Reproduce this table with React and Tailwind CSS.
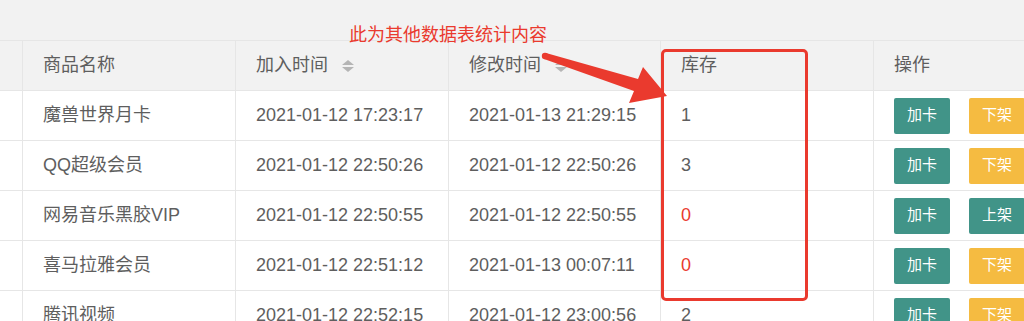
import React from 'react';

const rows = [
  { name: '魔兽世界月卡', add: '2021-01-12 17:23:17', mod: '2021-01-13 21:29:15', stock: 1, on: true },
  { name: 'QQ超级会员', add: '2021-01-12 22:50:26', mod: '2021-01-12 22:50:26', stock: 3, on: true },
  { name: '网易音乐黑胶VIP', add: '2021-01-12 22:50:55', mod: '2021-01-12 22:50:55', stock: 0, on: false },
  { name: '喜马拉雅会员', add: '2021-01-12 22:51:12', mod: '2021-01-13 00:07:11', stock: 0, on: true },
  { name: '腾讯视频', add: '2021-01-12 22:52:15', mod: '2021-01-12 23:00:56', stock: 2, on: true },
];

const grid = 'grid grid-cols-[22px_213px_213px_212px_213px_1fr] border-b border-[#e6e6e6]';
const cell = 'flex items-center pl-5 border-l border-[#e6e6e6] whitespace-nowrap';

const SortIcon = () => (
  <svg width="12" height="12" viewBox="0 0 12 12" className="ml-[14px]">
    <path d="M0 5 L6 0 L12 5 Z" fill="#b5b5b5" />
    <path d="M0 7 L6 12 L12 7 Z" fill="#b5b5b5" />
  </svg>
);

export default function App() {
  return (
    <div
      className="relative w-[1024px] h-[321px] overflow-hidden bg-white text-[18px] text-[#5e5e5e]"
      style={{ fontFamily: '"Liberation Sans", "Noto Sans CJK SC", sans-serif' }}
    >
      <div className="h-[41px] bg-[#f2f2f2] border-b border-[#e6e6e6]" />

      {/* header */}
      <div className={`${grid} h-[50px] bg-[#f2f2f2]`}>
        <div />
        <div className={cell}>商品名称</div>
        <div className={cell}>加入时间<SortIcon /></div>
        <div className={cell}>修改时间<SortIcon /></div>
        <div className={cell}>库存</div>
        <div className={cell}>操作</div>
      </div>

      {rows.map((r) => (
        <div key={r.name} className={`${grid} h-[50px]`}>
          <div />
          <div className={cell}>{r.name}</div>
          <div className={cell}>{r.add}</div>
          <div className={cell}>{r.mod}</div>
          <div className={`${cell} ${r.stock === 0 ? 'text-[#ea3a2e]' : ''}`}>{r.stock}</div>
          <div className={`${cell} gap-[19px]`}>
            <button className="w-[56px] h-[36px] shrink-0 rounded-[2px] bg-[#419488] text-white text-[15px]">加卡</button>
            <button
              className={`w-[56px] h-[36px] shrink-0 rounded-[2px] text-white text-[15px] ${
                r.on ? 'bg-[#f5bb41]' : 'bg-[#419488]'
              }`}
            >
              {r.on ? '下架' : '上架'}
            </button>
          </div>
        </div>
      ))}

      {/* annotation */}
      <div className="absolute left-[349px] top-[24px] text-[18px] leading-[22px] text-[#ea3a2e]">
        此为其他数据表统计内容
      </div>
      <div className="absolute left-[661px] top-[49px] w-[147px] h-[252px] border-[3px] border-[#ea3a2e] rounded-[5px]" />
      <svg className="absolute left-0 top-0" width="1024" height="321" viewBox="0 0 1024 321">
        <circle cx="545" cy="56" r="3.2" fill="#ea3a2e" />
        <polygon
          points="546,53 638,79 643,67 667,96 629,103 634,91 544,59"
          fill="#ea3a2e"
        />
      </svg>
    </div>
  );
}
